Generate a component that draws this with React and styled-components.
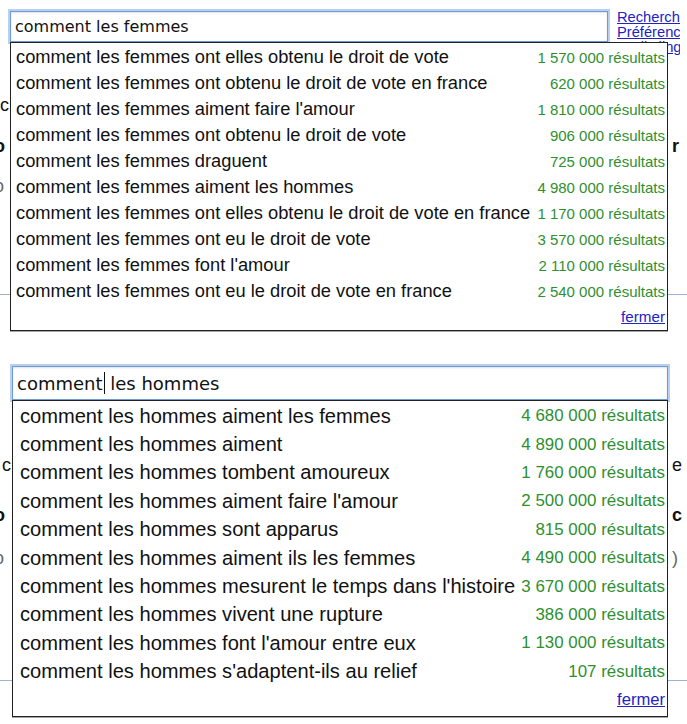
import React from 'react';
import styled, { createGlobalStyle } from 'styled-components';

const GlobalStyle = createGlobalStyle`
  html, body {
    margin: 0;
    padding: 0;
    background: #fff;
    overflow: hidden;
  }
  body {
    width: 687px;
    height: 724px;
    font-family: "Liberation Sans", Arial, sans-serif;
  }
`;

// two captures of the same suggest box, the second one a bit larger
const femmes = {
  query: 'comment les femmes',
  left: 10,
  fieldWidth: 598,
  fieldHeight: 31,
  boxWidth: 658,
  input: 16,
  main: 18.3,
  count: 15,
  row: 26,
  fermer: 15.2,
  fermerRow: 24,
  padLeft: 5,
  rows: [
    ['comment les femmes ont elles obtenu le droit de vote', '1 570 000'],
    ['comment les femmes ont obtenu le droit de vote en france', '620 000'],
    ["comment les femmes aiment faire l'amour", '1 810 000'],
    ['comment les femmes ont obtenu le droit de vote', '906 000'],
    ['comment les femmes draguent', '725 000'],
    ['comment les femmes aiment les hommes', '4 980 000'],
    ['comment les femmes ont elles obtenu le droit de vote en france', '1 170 000'],
    ['comment les femmes ont eu le droit de vote', '3 570 000'],
    ["comment les femmes font l'amour", '2 110 000'],
    ['comment les femmes ont eu le droit de vote en france', '2 540 000'],
  ],
};

const hommes = {
  query: 'comment les hommes',
  left: 12,
  fieldWidth: 656,
  fieldHeight: 34,
  boxWidth: 656,
  input: 18,
  main: 20.1,
  count: 16.9,
  row: 28.4,
  fermer: 16.6,
  fermerRow: 28,
  padLeft: 7,
  rows: [
    ['comment les hommes aiment les femmes', '4 680 000'],
    ['comment les hommes aiment', '4 890 000'],
    ['comment les hommes tombent amoureux', '1 760 000'],
    ["comment les hommes aiment faire l'amour", '2 500 000'],
    ['comment les hommes sont apparus', '815 000'],
    ['comment les hommes aiment ils les femmes', '4 490 000'],
    ["comment les hommes mesurent le temps dans l'histoire", '3 670 000'],
    ['comment les hommes vivent une rupture', '386 000'],
    ["comment les hommes font l'amour entre eux", '1 130 000'],
    ["comment les hommes s'adaptent-ils au relief", '107'],
  ],
};

const App = () => {
  return (
    <>
      <GlobalStyle />
      <Panel>
        <SearchRow top={11} left={femmes.left} height={femmes.fieldHeight}>
          <SuggestBox cfg={femmes}>{femmes.query}</SuggestBox>
          <SideLinks>
            <a href="#">Recherche avancée</a>
            <a href="#">Préférences</a>
            <a href="#">Outils linguistiques</a>
          </SideLinks>
        </SearchRow>
        <Backdrop
          gutter={femmes.left}
          rows={[
            { gap: 53, l: 'c' },
            { gap: 21, l: 'o', w: 5, bold: true, r: 'r' },
            { gap: 20, l: 'o', w: 4, soft: true },
          ]}
          lineGap={98}
        />
      </Panel>
      <Panel>
        <SearchRow top={71} left={hommes.left} height={hommes.fieldHeight}>
          <SuggestBox cfg={hommes}>
            comment<Caret />{' les hommes'}
          </SuggestBox>
        </SearchRow>
        <Backdrop
          gutter={hommes.left}
          rows={[
            { gap: 55, l: 'c', r: 'e' },
            { gap: 30, l: 'o', w: 5, bold: true, r: 'c' },
            { gap: 23, l: 'o', w: 4, soft: true, r: ')' },
          ]}
          lineGap={112}
        />
      </Panel>
    </>
  );
};

const SuggestBox = ({ cfg, children }) => (
  <Field width={cfg.fieldWidth} height={cfg.fieldHeight} size={cfg.input}>
    {children}
    <Dropdown width={cfg.boxWidth}>
      {cfg.rows.map(([text, count]) => (
        <Suggestion key={text} height={cfg.row} size={cfg.main} padLeft={cfg.padLeft}>
          <span>{text}</span>
          <Count size={cfg.count}>{count} résultats</Count>
        </Suggestion>
      ))}
      <CloseRow height={cfg.fermerRow} size={cfg.fermer}>
        <a href="#">fermer</a>
      </CloseRow>
    </Dropdown>
  </Field>
);

// bits of the results page peeking out on both sides of the dropdown
const Backdrop = ({ gutter, rows, lineGap }) => (
  <div>
    {rows.map((r, i) => (
      <BackRow key={i} gap={r.gap}>
        <Peek width={r.w || gutter - 1} bold={r.bold} soft={r.soft}>{r.l}</Peek>
        <PeekRight bold={r.bold} soft={r.soft || r.r === ')'}>{r.r}</PeekRight>
      </BackRow>
    ))}
    <Rule gap={lineGap} />
  </div>
);

const Panel = styled.section`
  display: flex;
  flex-direction: column;
`;

const SearchRow = styled.div`
  display: flex;
  align-items: flex-start;
  gap: 9px;
  height: ${p => p.height}px;
  margin-top: ${p => p.top}px;
  margin-left: ${p => p.left}px;
  position: relative;
  z-index: 2;
`;

const Field = styled.div`
  position: relative;
  flex-shrink: 0;
  box-sizing: border-box;
  width: ${p => p.width}px;
  height: ${p => p.height}px;
  display: flex;
  align-items: center;
  padding-left: 4px;
  border: 1px solid #6e9bd8;
  box-shadow: 0 0 0 2px rgba(128, 168, 224, 0.55), inset 0 1px 2px rgba(0, 0, 0, 0.12);
  background: #fff;
  font-family: "DejaVu Sans", "Noto Sans", sans-serif;
  font-size: ${p => p.size}px;
  color: #111;
  white-space: pre;
`;

const Caret = styled.span`
  display: inline-block;
  width: 1px;
  height: 22px;
  background: #111;
  margin: 0 0 0 1px;
  vertical-align: middle;
`;

const Dropdown = styled.div`
  position: absolute;
  top: calc(100% + 1px);
  left: -1px;
  z-index: 3;
  box-sizing: border-box;
  width: ${p => p.width}px;
  padding: 1px 0 2px;
  background: #fff;
  border: 1px solid #222;
  box-shadow: 0 1px 0 rgba(0, 0, 0, 0.35);
  font-family: "Liberation Sans", Arial, sans-serif;
  white-space: nowrap;
`;

const Suggestion = styled.div`
  display: flex;
  align-items: center;
  justify-content: space-between;
  gap: 2px;
  height: ${p => p.height}px;
  padding: 0 2px 0 ${p => p.padLeft}px;
  font-size: ${p => p.size}px;
  color: #111;
`;

const Count = styled.span`
  font-size: ${p => p.size}px;
  color: #2f8f2f;
`;

const CloseRow = styled.div`
  display: flex;
  align-items: center;
  justify-content: flex-end;
  height: ${p => p.height}px;
  padding-right: 2px;
  font-size: ${p => p.size}px;

  a {
    color: #2323c8;
    text-decoration: underline;
  }
`;

const SideLinks = styled.div`
  display: flex;
  flex-direction: column;
  flex-shrink: 0;
  width: 63px;
  overflow: hidden;
  margin-top: -1px;
  font-size: 14.7px;
  line-height: 15px;
  white-space: nowrap;

  a {
    color: #2222c4;
    text-decoration: underline;
  }
`;

const BackRow = styled.div`
  display: flex;
  justify-content: space-between;
  height: 20px;
  line-height: 20px;
  margin-top: ${p => p.gap}px;
  font-size: 18px;
`;

const Peek = styled.span`
  width: ${p => p.width}px;
  overflow: hidden;
  direction: rtl;
  text-align: right;
  font-weight: ${p => (p.bold ? 700 : 400)};
  color: ${p => (p.soft ? '#666' : '#111')};
`;

const PeekRight = styled.span`
  box-sizing: border-box;
  width: 19px;
  padding: 0 7px 0 4px;
  overflow: hidden;
  font-weight: ${p => (p.bold ? 700 : 400)};
  color: ${p => (p.soft ? '#666' : '#111')};
`;

const Rule = styled.div`
  margin-top: ${p => p.gap}px;
  height: 1px;
  background: #9fb2d0;
`;

export default App;
